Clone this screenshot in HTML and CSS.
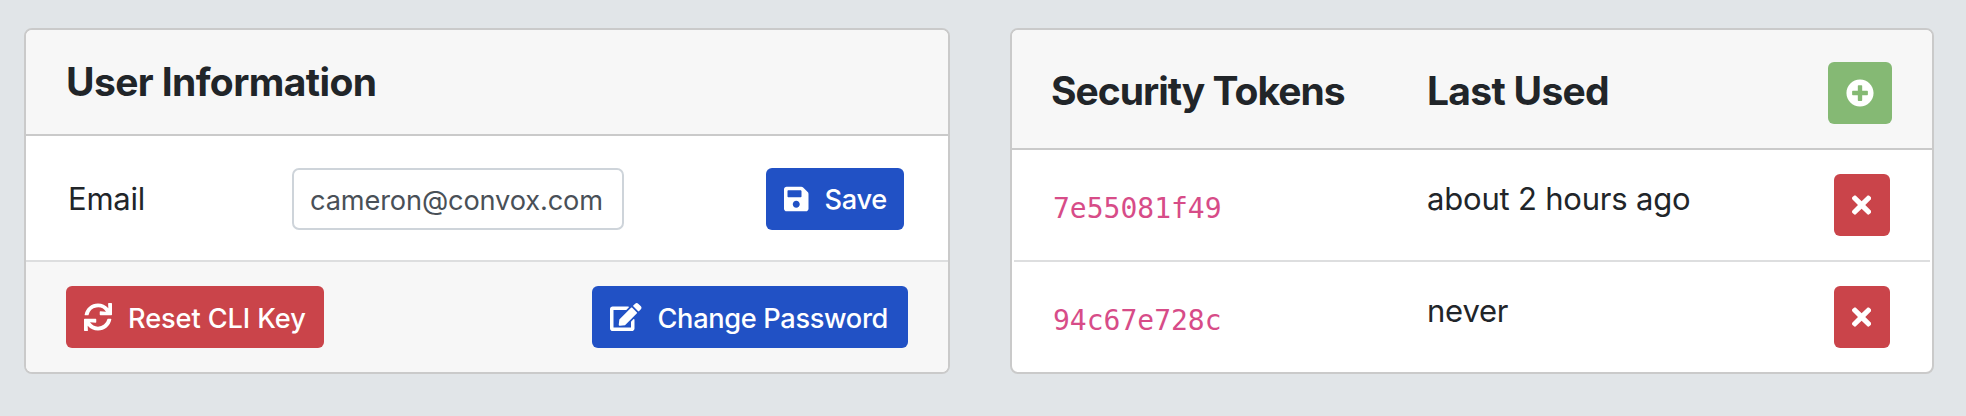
FILE: index.html
```html
<!DOCTYPE html>
<html lang="en">
<head>
<meta charset="utf-8">
<title>Account</title>
<link rel="stylesheet" href="styles.css">
</head>
<body>
<main class="page">
  <section class="card card-user">
    <header class="card-header"><h2 class="title title-user">User Information</h2></header>
    <div class="form-row">
      <label class="label" for="email">Email</label>
      <input class="input" id="email" type="text" value="cameron@convox.com">
      <button class="btn btn-primary btn-save" type="button">
        <svg class="icon" viewBox="0 0 448 512"><path d="M433.941 129.941l-83.882-83.882A48 48 0 0 0 316.118 32H48C21.49 32 0 53.49 0 80v352c0 26.51 21.49 48 48 48h352c26.51 0 48-21.49 48-48V163.882a48 48 0 0 0-14.059-33.941zM224 416c-35.346 0-64-28.654-64-64 0-35.346 28.654-64 64-64s64 28.654 64 64c0 35.346-28.654 64-64 64zm96-304.52V212c0 6.627-5.373 12-12 12H76c-6.627 0-12-5.373-12-12V108c0-6.627 5.373-12 12-12h228.52c3.183 0 6.235 1.264 8.485 3.515l3.48 3.48A11.996 11.996 0 0 1 320 111.48z"/></svg>
        <span class="btn-text text-save">Save</span>
      </button>
    </div>
    <footer class="card-footer">
      <button class="btn btn-danger btn-reset" type="button">
        <svg class="icon" viewBox="0 0 512 512"><path d="M440.65 12.57l4 82.77A247.16 247.16 0 0 0 255.83 8C134.73 8 33.91 94.92 12.29 209.82A12 12 0 0 0 24.09 224h49.05a12 12 0 0 0 11.67-9.26 175.91 175.91 0 0 1 317-56.94l-101.46-4.86a12 12 0 0 0-12.57 12v47.41a12 12 0 0 0 12 12H500a12 12 0 0 0 12-12V12a12 12 0 0 0-12-12h-47.37a12 12 0 0 0-11.98 12.57zM255.83 432a175.61 175.61 0 0 1-146-77.8l101.8 4.87a12 12 0 0 0 12.57-12v-47.4a12 12 0 0 0-12-12H12a12 12 0 0 0-12 12V500a12 12 0 0 0 12 12h47.35a12 12 0 0 0 12-12.6l-4.15-82.57A247.17 247.17 0 0 0 255.83 504c121.11 0 221.93-86.92 243.55-201.82a12 12 0 0 0-11.8-14.18h-49.05a12 12 0 0 0-11.67 9.26A175.86 175.86 0 0 1 255.83 432z"/></svg>
        <span class="btn-text text-reset">Reset CLI Key</span>
      </button>
      <button class="btn btn-primary btn-password" type="button">
        <svg class="icon" viewBox="0 0 576 512"><path d="M402.6 83.2l90.2 90.2c3.8 3.8 3.8 10 0 13.8L274.4 405.6l-92.8 10.3c-12.4 1.4-22.9-9.1-21.5-21.5l10.3-92.8L388.8 83.2c3.8-3.8 10-3.8 13.8 0zm162-22.9l-48.8-48.8c-15.2-15.2-39.9-15.2-55.2 0l-35.4 35.4c-3.8 3.8-3.8 10 0 13.8l90.2 90.2c3.8 3.8 10 3.8 13.8 0l35.4-35.4c15.2-15.3 15.2-40 0-55.2zM384 346.2V448H64V128h229.8c3.2 0 6.2-1.3 8.500-3.500l40-40c7.600-7.600 2.200-20.500-8.500-20.500H48C21.500 64 0 85.500 0 112v352c0 26.500 21.500 48 48 48h352c26.500 0 48-21.500 48-48V306.200c0-10.700-12.900-16-20.500-8.500l-40 40c-2.200 2.300-3.500 5.300-3.500 8.500z"/></svg>
        <span class="btn-text text-password">Change Password</span>
      </button>
    </footer>
  </section>

  <section class="card card-tokens">
    <header class="card-header token-grid">
      <h2 class="title title-tokens">Security Tokens</h2>
      <h2 class="title title-used">Last Used</h2>
      <button class="btn btn-success" type="button" aria-label="Add token">
        <svg class="icon" viewBox="0 0 512 512"><path d="M256 8C119 8 8 119 8 256s111 248 248 248 248-111 248-248S393 8 256 8zm144 276c0 6.600-5.400 12-12 12h-92v92c0 6.600-5.400 12-12 12h-56c-6.600 0-12-5.400-12-12v-92h-92c-6.600 0-12-5.400-12-12v-56c0-6.600 5.400-12 12-12h92v-92c0-6.600 5.400-12 12-12h56c6.600 0 12 5.400 12 12v92h92c6.600 0 12 5.400 12 12v56z"/></svg>
      </button>
    </header>
    <div class="token-row token-grid">
      <code class="token">7e55081f49</code>
      <span class="used">about 2 hours ago</span>
      <button class="btn btn-danger btn-delete" type="button" aria-label="Delete token">
        <svg class="icon" viewBox="0 0 352 512"><path d="M242.720 256l100.070-100.070c12.280-12.280 12.280-32.190 0-44.480l-22.240-22.240c-12.280-12.280-32.190-12.280-44.480 0L176 189.280 75.930 89.210c-12.280-12.280-32.190-12.280-44.480 0L9.210 111.450c-12.280 12.280-12.280 32.190 0 44.480L109.280 256 9.210 356.070c-12.280 12.280-12.280 32.190 0 44.480l22.240 22.240c12.280 12.280 32.200 12.280 44.480 0L176 322.720l100.070 100.070c12.280 12.280 32.200 12.280 44.480 0l22.240-22.240c12.280-12.280 12.280-32.190 0-44.480L242.720 256z"/></svg>
      </button>
    </div>
    <div class="token-row token-grid">
      <code class="token">94c67e728c</code>
      <span class="used">never</span>
      <button class="btn btn-danger btn-delete" type="button" aria-label="Delete token">
        <svg class="icon" viewBox="0 0 352 512"><path d="M242.720 256l100.070-100.070c12.280-12.280 12.280-32.190 0-44.480l-22.240-22.240c-12.280-12.280-32.190-12.280-44.480 0L176 189.280 75.930 89.210c-12.280-12.280-32.190-12.280-44.480 0L9.210 111.450c-12.280 12.280-12.280 32.190 0 44.480L109.280 256 9.210 356.070c-12.280 12.280-12.280 32.190 0 44.480l22.240 22.240c12.280 12.280 32.200 12.280 44.480 0L176 322.720l100.070 100.070c12.280 12.280 32.200 12.280 44.480 0l22.240-22.240c12.280-12.280 12.280-32.190 0-44.480L242.720 256z"/></svg>
      </button>
    </div>
  </section>
</main>
</body>
</html>
```
FILE: styles.css
```css
* { box-sizing: border-box; }

body {
  margin: 0;
  background: #e1e5e8;
  color: #212529;
  font-family: Inter, "Liberation Sans", sans-serif;
}

.page {
  display: flex;
  gap: 60px;
  height: 416px;
  padding: 28px 32px 42px 24px;
}

.card {
  display: flex;
  flex-direction: column;
  height: 346px;
  border: 2px solid #cacaca;
  border-radius: 8px;
  background: #fff;
  overflow: hidden;
}
.card-user { width: 926px; }
.card-tokens { width: 924px; }

.card-header {
  display: flex;
  align-items: center;
  height: 106px;
  padding-left: 40px;
  background: #f7f7f7;
  border-bottom: 2px solid #cacaca;
}

.title {
  margin: 0;
  font-size: 39px;
  font-weight: 700;
  line-height: 48px;
  white-space: nowrap;
}
.title-user { letter-spacing: -0.6px; }
.title-tokens, .title-used { padding-bottom: 5px; letter-spacing: -1px; }
.title-used { letter-spacing: -0.7px; }

.form-row {
  display: flex;
  align-items: center;
  height: 126px;
  padding: 2px 44px 0 42px;
  border-bottom: 2px solid #dddedf;
}
.label {
  width: 224px;
  font-size: 31px;
  line-height: 48px;
  letter-spacing: -0.25px;
}
.input {
  width: 332px;
  height: 62px;
  padding: 2px 16px 0;
  border: 2px solid #ced4da;
  border-radius: 7px;
  background: #fff;
  color: #495057;
  font: 27.2px Inter, "Liberation Sans", sans-serif;
  letter-spacing: -0.14px;
}

.card-footer {
  display: flex;
  align-items: center;
  justify-content: space-between;
  height: 110px;
  padding: 0 40px;
  background: #f7f7f7;
}

.btn {
  display: flex;
  align-items: center;
  flex: none;
  height: 62px;
  padding: 0 18px;
  border: 0;
  border-radius: 6px;
  color: #fff;
  font: 500 27.2px/42px Inter, "Liberation Sans", sans-serif;
  white-space: nowrap;
}
.btn-text { margin-left: 16px; padding-top: 2px; font-weight: 450; }
.text-save { letter-spacing: -0.3px; }
.text-reset { padding-top: 3px; letter-spacing: -0.1px; }
.text-password { padding-top: 3px; letter-spacing: -0.33px; }
.btn-primary { background: #2151c5; }
.btn-danger { background: #ca444a; }
.btn-success { width: 64px; background: #85b974; }
.btn-save { width: 138px; margin-left: auto; }
.btn-reset { width: 258px; }
.btn-password { width: 316px; }
.btn-delete { width: 56px; margin-left: 6px; }

.icon {
  flex: none;
  height: 28px;
  fill: currentColor;
}

.token-grid {
  display: grid;
  grid-template-columns: 376px 401px 64px;
  align-items: center;
  padding-left: 39px;
}
.card-tokens .card-header { height: 120px; padding-top: 8px; }

.token-row {
  height: 110px;
  margin: 0 2px;
  padding-left: 37px;
}
.token-row + .token-row {
  height: 112px;
  border-top: 2px solid #dddedf;
}
.token {
  padding: 8px 0 0 2px;
  color: #d74c88;
  font: 28px/42px "DejaVu Sans Mono", monospace;
}
.used {
  align-self: start;
  padding-top: 25px;
  font-size: 31px;
  line-height: 48px;
  letter-spacing: -0.2px;
}
```
